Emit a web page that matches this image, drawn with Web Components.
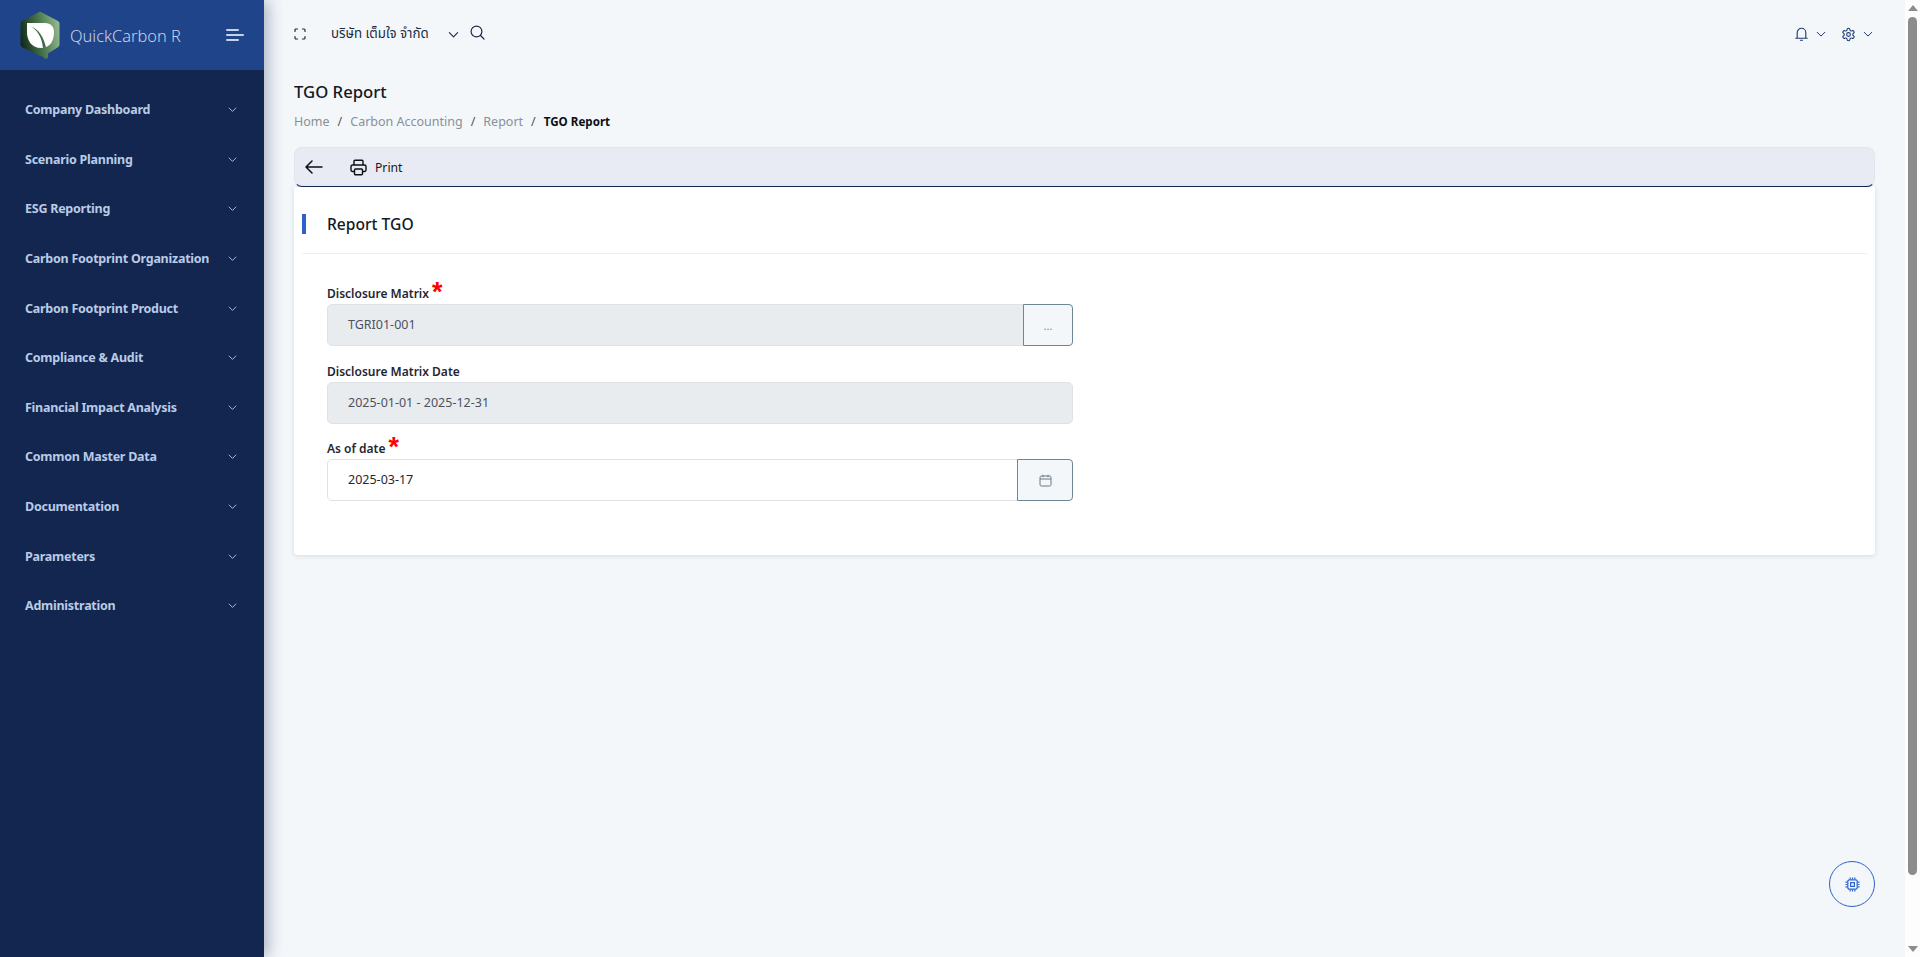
<!DOCTYPE html>
<html lang="en">
<head>
<meta charset="utf-8">
<title>TGO Report</title>
<style>
  html, body { margin: 0; height: 100%; overflow: hidden; }
  body { font-family: "Noto Sans", "Open Sans", sans-serif; background: #f3f7fa; }
</style>
</head>
<body>
<app-shell>
  <side-bar slot="side">
    <side-item>Company Dashboard</side-item>
    <side-item>Scenario Planning</side-item>
    <side-item>ESG Reporting</side-item>
    <side-item>Carbon Footprint Organization</side-item>
    <side-item>Carbon Footprint Product</side-item>
    <side-item>Compliance &amp; Audit</side-item>
    <side-item>Financial Impact Analysis</side-item>
    <side-item>Common Master Data</side-item>
    <side-item>Documentation</side-item>
    <side-item>Parameters</side-item>
    <side-item>Administration</side-item>
  </side-bar>
  <top-bar></top-bar>
  <page-head></page-head>
  <tool-bar></tool-bar>
  <report-card>
    <form-field label="Disclosure Matrix" value="TGRI01-001" required disabled action="dots"></form-field>
    <form-field label="Disclosure Matrix Date" value="2025-01-01 - 2025-12-31" disabled></form-field>
    <form-field label="As of date" value="2025-03-17" required action="calendar"></form-field>
  </report-card>
</app-shell>

<script>
const chevron = (size, color, sw) => `<svg width="${size}" height="${size}" viewBox="0 0 24 24" fill="none" stroke="${color}" stroke-width="${sw}" stroke-linecap="round" stroke-linejoin="round"><path d="M3 8l9 9 9-9"/></svg>`

class AppShell extends HTMLElement {
  constructor() {
    super()
    this.attachShadow({ mode: "open" })
    this.shadowRoot.innerHTML = `
<style>
  :host { display: flex; height: 957px; width: 1920px; background: #f3f7fa; position: relative; overflow: hidden; }
  .side { flex: 0 0 264px; position: relative; z-index: 2; box-shadow: 4px 0 14px rgba(18,38,79,.32); }
  .main { flex: 1; min-width: 0; padding: 0 30px; box-sizing: border-box; }
  .scroll { flex: 0 0 15px; display: flex; flex-direction: column; align-items: center; background: #fdfdfd; }
  .up, .down { width: 0; height: 0; border-left: 5px solid transparent; border-right: 5px solid transparent; }
  .up { border-bottom: 6px solid #8c8c8c; margin: 5px 0 6px; }
  .down { border-top: 6px solid #8c8c8c; margin-top: auto; margin-bottom: 5px; }
  .thumb { width: 9px; height: 858px; border-radius: 5px; background: #8c8c8c; }
  .fab { position: absolute; left: 1829px; top: 861px; width: 46px; height: 46px; box-sizing: border-box; border: 1px solid #2f62c9; border-radius: 50%; display: flex; align-items: center; justify-content: center; }
</style>
<div class="side"><slot name="side"></slot></div>
<div class="main"><slot></slot></div>
<div class="scroll"><div class="up"></div><div class="thumb"></div><div class="down"></div></div>
<div class="fab">
  <svg width="15" height="15" viewBox="0 0 16 16" fill="none" stroke="#2f62c9" stroke-width="1.3">
    <rect x="3" y="3" width="10" height="10" rx="1.5"/><rect x="6" y="6" width="4" height="4"/>
    <path d="M5.5 0.5v2M8 0.5v2M10.5 0.5v2M5.5 13.5v2M8 13.5v2M10.5 13.5v2M0.5 5.5h2M0.5 8h2M0.5 10.5h2M13.5 5.5h2M13.5 8h2M13.5 10.5h2"/>
  </svg>
</div>`
  }
}

class SideBar extends HTMLElement {
  constructor() {
    super()
    this.attachShadow({ mode: "open" })
    this.shadowRoot.innerHTML = `
<style>
  :host { display: flex; flex-direction: column; height: 957px; background: #12264f; }
  .brand { height: 70px; background: #1f4489; display: flex; align-items: center; padding: 0 20px 0 19px; box-sizing: border-box; flex: none; }
  .name { font-size: 16.4px; font-weight: 300; color: #c5d3ea; margin-left: 9px; flex: 1; white-space: nowrap; }
  .list { padding-top: 15px; display: flex; flex-direction: column; }
</style>
<div class="brand">
  <svg width="42" height="48" viewBox="0 0 42 48">
    <defs><linearGradient id="hex" x1="0" x2="1" y1="0.6" y2="0.4"><stop offset="0" stop-color="#12291a"/><stop offset=".55" stop-color="#4c7a50"/><stop offset="1" stop-color="#93b98f"/></linearGradient></defs>
    <path d="M21 .5 39 10a3 3 0 0 1 1.5 2.6v21a3 3 0 0 1-1.5 2.6L29 42.5v2.5a2.5 2.5 0 0 1-5 .5L21 45 3 36.2a3 3 0 0 1-1.5-2.6v-21A3 3 0 0 1 3 10z" fill="url(#hex)"/>
    <path d="M8 12h18c6 0 9 4 9 9 0 9-4 16-13 16C13 37 8 30 8 21z" fill="#fff"/>
    <path d="M11 15c6 3 12 10 13 22l3-.5C25 27 20 18 11 15z" fill="#3e6a46"/>
  </svg>
  <span class="name">QuickCarbon R</span>
  <svg width="18" height="14" viewBox="0 0 18 14" fill="#c5d3ea"><rect x="0" y="1" width="13" height="2" rx="1"/><rect x="0" y="6" width="18" height="2" rx="1"/><rect x="0" y="11" width="13" height="2" rx="1"/></svg>
</div>
<div class="list"><slot></slot></div>`
  }
}

class SideItem extends HTMLElement {
  constructor() {
    super()
    this.attachShadow({ mode: "open" })
    this.shadowRoot.innerHTML = `
<style>
  :host { display: flex; align-items: center; justify-content: space-between; height: 49.6px; padding: 0 27px 0 25px; color: #b9cbe6; font-size: 12.5px; letter-spacing: -.25px; font-weight: 700; white-space: nowrap; }
</style>
<span><slot></slot></span>${chevron(9, "#b9cbe6", 2.4)}`
  }
}

class TopBar extends HTMLElement {
  constructor() {
    super()
    this.attachShadow({ mode: "open" })
    this.shadowRoot.innerHTML = `
<style>
  :host { display: flex; align-items: center; height: 68px; color: #1c2b45; font-size: 13.3px; padding-right: 2px; }
  .co { margin-left: 25px; font-family: "Noto Sans", "Noto Sans Thai", "Noto Sans CJK SC", sans-serif; width: 117px; white-space: nowrap; }
  .right { margin-left: auto; display: flex; align-items: center; }
  .gap { margin-left: 8px; display: flex; }
  .tight { margin-left: 7px; display: flex; }
</style>
<svg width="12" height="12" viewBox="0 0 12 12" fill="none" stroke="#1c2b45" stroke-width="1.2" stroke-linecap="round"><path d="M1 3.5V2a1 1 0 0 1 1-1h1.5M8.5 1H10a1 1 0 0 1 1 1v1.5M11 8.5V10a1 1 0 0 1-1 1H8.5M3.5 11H2a1 1 0 0 1-1-1V8.5"/></svg>
<span class="co">บริษัท เต็มใจ จำกัด</span>
${chevron(11, "#1c2b45", 2.4)}
<svg style="margin-left:11px;margin-top:-3px" width="15" height="15" viewBox="0 0 15 15" fill="none" stroke="#1c2b45" stroke-width="1.2" stroke-linecap="round"><circle cx="6.5" cy="6.5" r="5.4"/><path d="M10.5 10.5 14 14"/></svg>
<div class="right">
  <svg width="13" height="14" viewBox="0 0 13 14" fill="none" stroke="#1c3a6e" stroke-width="1.1" stroke-linecap="round"><path d="M0.8 11.3h11.4M2.2 11.3V5.6a4.3 4.3 0 0 1 8.6 0v5.7M5.5 13.2h2"/></svg>
  <span class="gap">${chevron(10, "#1c3a6e", 2.4)}</span>
  <svg style="margin-left:15px" width="15" height="15" viewBox="0 0 24 24" fill="none" stroke="#1c3a6e" stroke-width="1.7" stroke-linejoin="round"><circle cx="12" cy="12" r="3"/><path d="M12.22 2h-.44a2 2 0 0 0-2 2v.18a2 2 0 0 1-1 1.73l-.43.25a2 2 0 0 1-2 0l-.15-.08a2 2 0 0 0-2.73.73l-.22.38a2 2 0 0 0 .73 2.73l.15.1a2 2 0 0 1 1 1.72v.51a2 2 0 0 1-1 1.74l-.15.09a2 2 0 0 0-.73 2.73l.22.38a2 2 0 0 0 2.73.73l.15-.08a2 2 0 0 1 2 0l.43.25a2 2 0 0 1 1 1.73V20a2 2 0 0 0 2 2h.44a2 2 0 0 0 2-2v-.18a2 2 0 0 1 1-1.73l.43-.25a2 2 0 0 1 2 0l.15.08a2 2 0 0 0 2.73-.73l.22-.39a2 2 0 0 0-.73-2.73l-.15-.08a2 2 0 0 1-1-1.74v-.5a2 2 0 0 1 1-1.74l.15-.09a2 2 0 0 0 .73-2.73l-.22-.38a2 2 0 0 0-2.73-.73l-.15.08a2 2 0 0 1-2 0l-.43-.25a2 2 0 0 1-1-1.73V4a2 2 0 0 0-2-2z"/></svg>
  <span class="tight">${chevron(10, "#1c3a6e", 2.4)}</span>
</div>`
  }
}

class PageHead extends HTMLElement {
  constructor() {
    super()
    this.attachShadow({ mode: "open" })
    this.shadowRoot.innerHTML = `
<style>
  :host { display: block; height: 79px; }
  h1 { margin: 0; padding-top: 12px; font-size: 16.7px; font-weight: 500; line-height: 24px; color: #14181f; }
  nav { margin-top: 8px; font-size: 12.5px; line-height: 20px; color: #8a8f98; display: flex; white-space: nowrap; }
  i { font-style: normal; color: #555; margin: 0 8px; }
  b { color: #0c0f14; font-weight: 700; font-size: 11.6px; }
</style>
<h1>TGO Report</h1>
<nav><span>Home</span><i>/</i><span>Carbon Accounting</span><i>/</i><span>Report</span><i>/</i><b>TGO Report</b></nav>`
  }
}

class ToolBar extends HTMLElement {
  constructor() {
    super()
    this.attachShadow({ mode: "open" })
    this.shadowRoot.innerHTML = `
<style>
  :host { display: flex; align-items: center; height: 40px; box-sizing: border-box; background: #e8ebf3; border: 1px solid #e1e5ee; border-bottom: 1px solid #12264f; border-radius: 8px; padding: 0 10px; color: #14181f; font-size: 12.2px; }
  span { margin-left: 8px; }
</style>
<svg width="18" height="14" viewBox="0 0 18 14" fill="none" stroke="#0c0f14" stroke-width="1.5" stroke-linecap="round" stroke-linejoin="round"><path d="M17 7H1M7 1 1 7l6 6"/></svg>
<svg style="margin-left:27px" width="17" height="17" viewBox="0 0 17 17" fill="none" stroke="#0c0f14" stroke-width="1.4" stroke-linejoin="round"><path d="M4 6V2.2A1 1 0 0 1 5 1.2h7a1 1 0 0 1 1 1V6M4 12.5H2.5a1.5 1.5 0 0 1-1.5-1.5V7.5A1.5 1.5 0 0 1 2.5 6h12A1.5 1.5 0 0 1 16 7.5V11a1.5 1.5 0 0 1-1.5 1.5H13"/><rect x="4.5" y="10" width="8" height="5.8" rx="1"/></svg>
<span>Print</span>`
  }
}

class ReportCard extends HTMLElement {
  constructor() {
    super()
    this.attachShadow({ mode: "open" })
    this.shadowRoot.innerHTML = `
<style>
  :host { display: block; height: 368px; box-sizing: border-box; background: #fff; padding: 0 8px; box-shadow: 0 1px 5px rgba(40,60,100,.14); border-radius: 0 0 4px 4px; }
  .head { height: 67px; border-bottom: 1px solid #eef0f4; display: flex; align-items: center; box-sizing: border-box; padding-top: 7px; }
  .bar { width: 4px; height: 20px; background: #2f62c9; margin-right: 21px; }
  .title { font-size: 15.6px; font-weight: 500; color: #14181f; }
  .form { width: 746px; margin-left: 25px; padding-top: 14.5px; display: flex; flex-direction: column; }
</style>
<div class="head"><div class="bar"></div><div class="title">Report TGO</div></div>
<div class="form"><slot></slot></div>`
  }
}

class FormField extends HTMLElement {
  constructor() {
    super()
    this.attachShadow({ mode: "open" })
  }

  connectedCallback() {
    const label = this.getAttribute("label")
    const value = this.getAttribute("value")
    const disabled = this.hasAttribute("disabled")
    const action = this.getAttribute("action")
    let btn = ""
    if (action == "dots") btn = `<div class="btn dots">...</div>`
    if (action == "calendar") btn = `<div class="btn cal"><svg width="13" height="13" viewBox="0 0 13 13" fill="none" stroke="#6b7785" stroke-width="1"><rect x="1" y="2" width="11" height="10" rx="1.5"/><path d="M1 5h11M4 .8v2.4M9 .8v2.4"/></svg></div>`
    this.shadowRoot.innerHTML = `
<style>
  :host { display: block; }
  label { display: block; height: 35.5px; box-sizing: border-box; padding-top: 16.5px; font-size: 12px; line-height: 17px; font-weight: 600; color: #1f2733; position: relative; white-space: nowrap; }
  .star { color: #f00; font-size: 27px; font-weight: 700; line-height: 10px; margin-left: 3px; font-family: "Liberation Sans", sans-serif; vertical-align: -3px; }
  .box { display: flex; height: 42px; box-sizing: border-box; border: 1px solid #dee2e6; border-radius: 5px; background: ${disabled ? "#e9ecef" : "#fff"}; }
  .val { flex: 1; padding-left: 20px; line-height: 40px; font-size: 12.5px; color: ${disabled ? "#4a5260" : "#1f2733"}; }
  .btn { margin: -1px; background: #f3f7fa; border: 1px solid #6f8794; border-radius: 0 4px 4px 0; display: flex; align-items: center; justify-content: center; box-sizing: border-box; }
  .dots { width: 50px; color: #7b8591; font-size: 11px; }
  .cal { width: 56px; }
</style>
<label>${label}${this.hasAttribute("required") ? '<span class="star">*</span>' : ""}</label>
<div class="box"><div class="val">${value}</div>${btn}</div>`
  }
}

customElements.define("app-shell", AppShell)
customElements.define("side-bar", SideBar)
customElements.define("side-item", SideItem)
customElements.define("top-bar", TopBar)
customElements.define("page-head", PageHead)
customElements.define("tool-bar", ToolBar)
customElements.define("report-card", ReportCard)
customElements.define("form-field", FormField)
</script>
</body>
</html>
